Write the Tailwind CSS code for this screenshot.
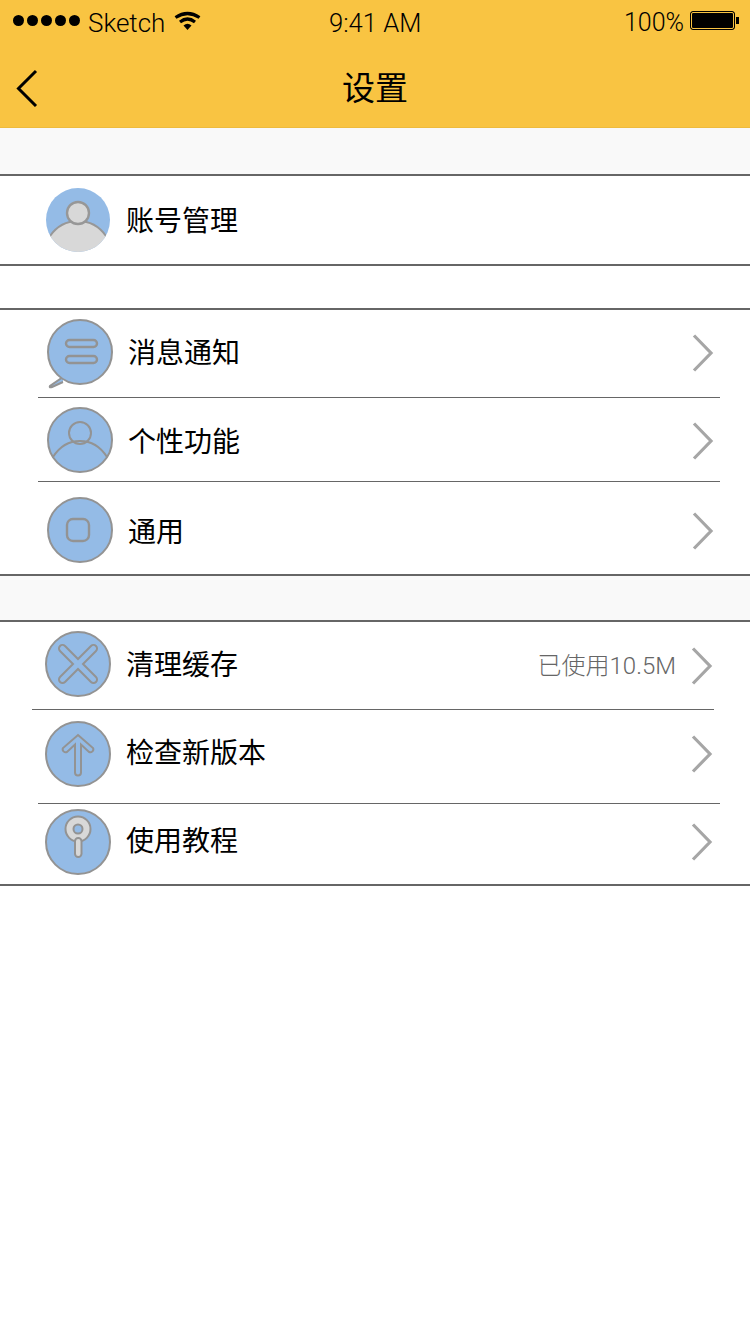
<!DOCTYPE html>
<html lang="zh-CN">
  <head>
    <meta charset="UTF-8" />
    <title>设置</title>
    <script src="https://cdn.jsdelivr.net/npm/@tailwindcss/browser@4"></script>
  </head>
  <body class="bg-white w-[750px] h-[1334px] overflow-hidden font-['Liberation_Sans','Noto_Sans_CJK_SC',sans-serif]">
    <!-- status bar + nav -->
    <header class="h-[128px] bg-[#f9c442] border-b border-[#eebb3e] text-black">
      <div class="h-[44px] flex items-start relative font-['Roboto',sans-serif] font-light">
        <div class="flex gap-[3px] ml-[13px] mt-[15px]">
          <span class="w-[11px] h-[11px] rounded-full bg-black"></span>
          <span class="w-[11px] h-[11px] rounded-full bg-black"></span>
          <span class="w-[11px] h-[11px] rounded-full bg-black"></span>
          <span class="w-[11px] h-[11px] rounded-full bg-black"></span>
          <span class="w-[11px] h-[11px] rounded-full bg-black"></span>
        </div>
        <span class="ml-[8px] mt-[9px] text-[26px] leading-[28px]">Sketch</span>
        <svg class="ml-[9px] mt-[11px]" width="27" height="20" viewBox="0 0 27 20" fill="none" stroke="#000" stroke-width="3.2">
          <path d="M1.5 6.5 Q13.5 -1.5 25.5 6.5" />
          <path d="M6 11 Q13.5 5 21 11" />
          <path d="M9.5 14.5 L13.5 19 L17.5 14.5 Q13.5 11 9.5 14.5Z" fill="#000" stroke="none" />
        </svg>
        <span class="absolute left-[329px] top-[9px] text-[25.6px] leading-[28px]">9:41 AM</span>
        <span class="absolute left-[624px] top-[9px] text-[25px] leading-[28px]">100%</span>
        <div class="absolute left-[690px] top-[11px] flex items-center">
          <div class="w-[45px] h-[19px] rounded-[3px] bg-black border border-black outline-1 outline-offset-[-2px] outline-[#f9c442]"></div>
          <div class="w-[3px] h-[7px] bg-black ml-[1px]"></div>
        </div>
      </div>
      <div class="h-[83px] flex items-center justify-center relative">
        <svg class="absolute left-[15px] top-[25px]" width="24" height="38" viewBox="0 0 24 38" fill="none" stroke="#000" stroke-width="3">
          <path d="M21 2 L3.5 19.5 L21 37" />
        </svg>
        <h1 class="text-[33px] leading-[44px] font-normal font-['Noto_Sans_CJK_SC',sans-serif] mt-[1px]">设置</h1>
      </div>
    </header>

    <div class="h-[46px] bg-[#f9f9f9]"></div>
    <div class="h-[2px] bg-[#666]"></div>
    <!-- account -->
    <div class="h-[88px] flex items-start">
      <svg class="ml-[46px] mt-[12px]" width="64" height="64" viewBox="0 0 64 64">
        <clipPath id="clip-a"><circle cx="32" cy="32" r="32" /></clipPath>
        <circle cx="32" cy="32" r="32" fill="#94bbe6" />
        <path clip-path="url(#clip-a)" d="M4 48 C11 38 21 33 32 33 C43 33 53 38 60 48 L70 70 L-6 70Z" fill="#d8d8d8" stroke="#979797" stroke-width="2" />
        <circle cx="32" cy="25" r="11" fill="#d8d8d8" stroke="#979797" stroke-width="2.4" />
      </svg>
      <span class="ml-[16px] mt-[26px] text-[28px] leading-[40px] text-black">账号管理</span>
    </div>
    <div class="h-[2px] bg-[#666]"></div>
    <div class="h-[42px]"></div>
    <div class="h-[2px] bg-[#666]"></div>

    <!-- group 2 -->
    <div class="h-[87px] flex items-start">
      <svg class="ml-[47px] mt-[9px]" width="66" height="70" viewBox="0 0 66 70" fill="none" stroke="#939393" stroke-width="2">
        <path d="M16 58 L3 67 Q2 69 5 68 L16 63" fill="#94bbe6" />
        <circle cx="33" cy="33" r="32" fill="#94bbe6" />
        <rect x="19" y="21" width="31" height="7" rx="3.5" stroke-width="2.4" />
        <rect x="19" y="37" width="31" height="7" rx="3.5" stroke-width="2.4" />
      </svg>
      <span class="ml-[15px] mt-[24px] text-[28px] leading-[40px] text-black">消息通知</span>
      <svg class="ml-auto mr-[36px] mt-[24px]" width="22" height="38" viewBox="0 0 22 38" fill="none" stroke="#a6a6a6" stroke-width="3.2">
        <path d="M2 1.5 L19 19 L2 36.5" />
      </svg>
    </div>
    <div class="h-[1px] ml-[38px] w-[682px] bg-[#666]"></div>
    <div class="h-[83px] flex items-start">
      <svg class="ml-[47px] mt-[9px]" width="66" height="66" viewBox="0 0 66 66" fill="none" stroke="#939393" stroke-width="2">
        <circle cx="33" cy="33" r="32" fill="#94bbe6" />
        <circle cx="33" cy="26" r="11" />
        <path d="M6 50 C13 39 22 34 33 34 C44 34 53 39 60 50" />
      </svg>
      <span class="ml-[15px] mt-[25px] text-[28px] leading-[40px] text-black">个性功能</span>
      <svg class="ml-auto mr-[36px] mt-[24px]" width="22" height="38" viewBox="0 0 22 38" fill="none" stroke="#a6a6a6" stroke-width="3.2">
        <path d="M2 1.5 L19 19 L2 36.5" />
      </svg>
    </div>
    <div class="h-[1px] ml-[38px] w-[682px] bg-[#666]"></div>
    <div class="h-[92px] flex items-start">
      <svg class="ml-[47px] mt-[15px]" width="66" height="66" viewBox="0 0 66 66" fill="none" stroke="#939393" stroke-width="2">
        <circle cx="33" cy="33" r="32" fill="#94bbe6" />
        <rect x="20" y="22" width="22" height="22" rx="6" stroke-width="2.4" />
      </svg>
      <span class="ml-[15px] mt-[31px] text-[28px] leading-[40px] text-black">通用</span>
      <svg class="ml-auto mr-[36px] mt-[30px]" width="22" height="38" viewBox="0 0 22 38" fill="none" stroke="#a6a6a6" stroke-width="3.2">
        <path d="M2 1.5 L19 19 L2 36.5" />
      </svg>
    </div>
    <div class="h-[2px] bg-[#666]"></div>
    <div class="h-[44px] bg-[#f9f9f9]"></div>
    <div class="h-[2px] bg-[#666]"></div>

    <!-- group 3 -->
    <div class="h-[87px] flex items-start">
      <svg class="ml-[45px] mt-[9px]" width="66" height="66" viewBox="0 0 66 66" fill="none" stroke="#939393" stroke-width="2">
        <circle cx="33" cy="33" r="32" fill="#94bbe6" />
        <path d="M33 28 L46 15 A3.5 3.5 0 0 1 51 20 L38 33 L51 46 A3.5 3.5 0 0 1 46 51 L33 38 L20 51 A3.5 3.5 0 0 1 15 46 L28 33 L15 20 A3.5 3.5 0 0 1 20 15 Z" />
      </svg>
      <span class="ml-[15px] mt-[24px] text-[28px] leading-[40px] text-black">清理缓存</span>
      <span class="ml-auto mt-[24px] text-[24px] leading-[40px] font-light text-[#666] font-['Roboto','Noto_Sans_CJK_SC',sans-serif]">已使用10.5M</span>
      <svg class="ml-[15px] mr-[37px] mt-[25px]" width="22" height="38" viewBox="0 0 22 38" fill="none" stroke="#a6a6a6" stroke-width="3.2">
        <path d="M2 1.5 L19 19 L2 36.5" />
      </svg>
    </div>
    <div class="h-[1px] ml-[32px] w-[682px] bg-[#666]"></div>
    <div class="h-[93px] flex items-start">
      <svg class="ml-[45px] mt-[11px]" width="66" height="66" viewBox="0 0 66 66" fill="none" stroke="#939393" stroke-width="2">
        <circle cx="33" cy="33" r="32" fill="#94bbe6" />
        <path d="M33 14 L48 27 A3 3 0 0 1 44 31 L36 23.5 L36 51.5 A3 3 0 0 1 30 51.5 L30 23.5 L22 31 A3 3 0 0 1 18 27 Z" />
      </svg>
      <span class="ml-[15px] mt-[24px] text-[28px] leading-[40px] text-black">检查新版本</span>
      <svg class="ml-auto mr-[37px] mt-[25px]" width="22" height="38" viewBox="0 0 22 38" fill="none" stroke="#a6a6a6" stroke-width="3.2">
        <path d="M2 1.5 L19 19 L2 36.5" />
      </svg>
    </div>
    <div class="h-[1px] ml-[38px] w-[682px] bg-[#666]"></div>
    <div class="h-[80px] flex items-start">
      <svg class="ml-[45px] mt-[5px]" width="66" height="66" viewBox="0 0 66 66" fill="none" stroke="#939393" stroke-width="2">
        <circle cx="33" cy="33" r="32" fill="#94bbe6" />
        <circle cx="33" cy="20" r="12.5" fill="#d8d8d8" />
        <circle cx="33" cy="20" r="4.5" fill="#94bbe6" />
        <rect x="30" y="29" width="6.5" height="19" rx="3.2" fill="#d8d8d8" />
      </svg>
      <span class="ml-[15px] mt-[18px] text-[28px] leading-[40px] text-black">使用教程</span>
      <svg class="ml-auto mr-[37px] mt-[19px]" width="22" height="38" viewBox="0 0 22 38" fill="none" stroke="#a6a6a6" stroke-width="3.2">
        <path d="M2 1.5 L19 19 L2 36.5" />
      </svg>
    </div>
    <div class="h-[2px] bg-[#666]"></div>
  </body>
</html>
